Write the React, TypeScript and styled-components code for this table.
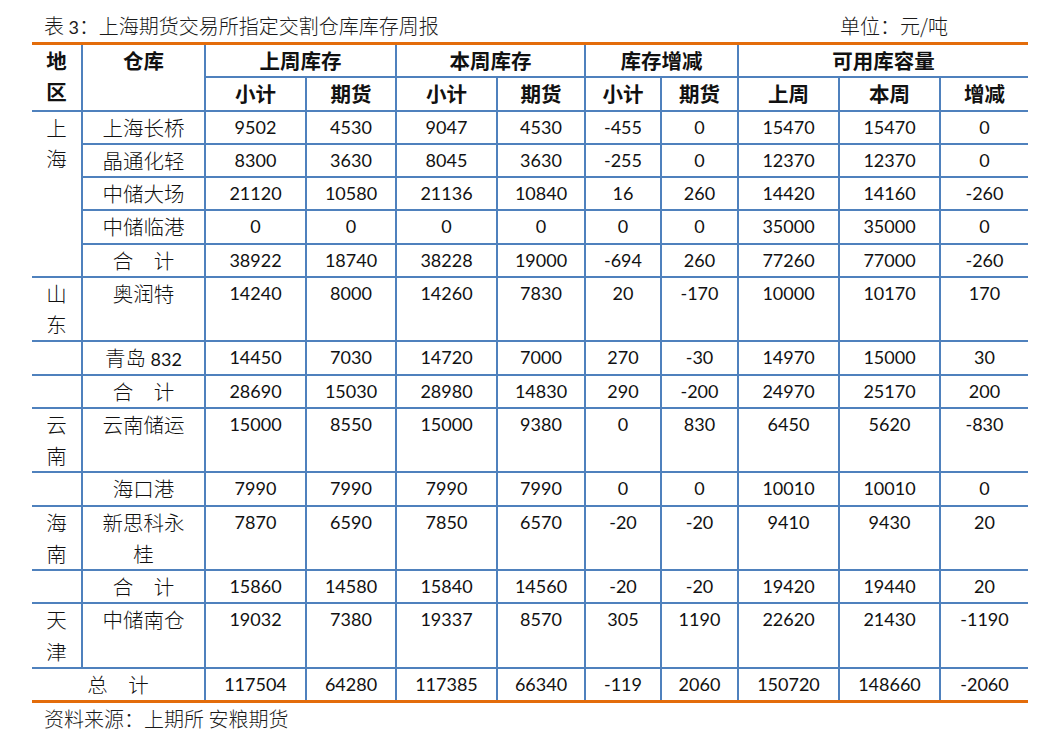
import React from 'react';
import styled, { createGlobalStyle } from 'styled-components';

const BLUE = '#4f81bd';
const ORANGE = '#e36c0a';

const GlobalStyle = createGlobalStyle`
  html, body {
    margin: 0;
    padding: 0;
    background: #ffffff;
  }
  body {
    font-family: 'Noto Sans CJK SC', sans-serif;
    color: #111111;
  }
`;

const Page = styled.div`
  width: 1058px;
  padding: 0 30px 0 32px;
  box-sizing: border-box;
`;

const TitleBar = styled.div`
  display: flex;
  justify-content: space-between;
  align-items: flex-end;
  height: 42px;
  padding: 0 80px 0 12px;
  box-sizing: border-box;
`;

const Title = styled.div`
  font-size: 20px;
  font-weight: 300;
  line-height: 32px;
  color: #1a1a1a;
`;

const Unit = styled(Title)``;

const Table = styled.table`
  width: 996px;
  table-layout: fixed;
  border-collapse: collapse;
  border-top: 3px solid ${ORANGE};
  border-bottom: 3px solid ${ORANGE};
  border-left: hidden;
  border-right: hidden;
`;

const Cell = styled.td`
  padding: 0;
  border: 2px solid ${BLUE};
  text-align: center;
  vertical-align: top;
  font-size: 20.5px;
  font-weight: 300;
  line-height: 31.25px;
  height: 31px;
  color: #111111;
  white-space: nowrap;
`;

const NumCell = styled(Cell)`
  font-family: Lato, 'Liberation Sans', sans-serif;
  font-size: 18px;
  font-weight: 400;
`;

const HeadCell = styled.th`
  padding: 0;
  border: 2px solid ${BLUE};
  text-align: center;
  vertical-align: top;
  font-size: 20.5px;
  font-weight: 700;
  line-height: 31.25px;
  height: 31px;
  color: #111111;
`;

const Num = styled.span`
  font-family: Lato, 'Liberation Sans', sans-serif;
  font-size: 18px;
  font-weight: 400;
  line-height: 1;
`;

const Source = styled.div`
  padding: 0 0 0 12px;
  font-size: 20px;
  font-weight: 300;
  line-height: 32px;
  color: #1a1a1a;
`;

type Row = {
  region?: string[] | '';
  regionSpan?: number;
  name: React.ReactNode;
  values: string[];
};

const rows: Row[] = [
  { region: ['上', '海'], regionSpan: 5, name: '上海长桥', values: ['9502', '4530', '9047', '4530', '-455', '0', '15470', '15470', '0'] },
  { name: '晶通化轻', values: ['8300', '3630', '8045', '3630', '-255', '0', '12370', '12370', '0'] },
  { name: '中储大场', values: ['21120', '10580', '21136', '10840', '16', '260', '14420', '14160', '-260'] },
  { name: '中储临港', values: ['0', '0', '0', '0', '0', '0', '35000', '35000', '0'] },
  { name: '合　计', values: ['38922', '18740', '38228', '19000', '-694', '260', '77260', '77000', '-260'] },
  { region: ['山', '东'], name: '奥润特', values: ['14240', '8000', '14260', '7830', '20', '-170', '10000', '10170', '170'] },
  { region: '', name: <>青岛 <Num>832</Num></>, values: ['14450', '7030', '14720', '7000', '270', '-30', '14970', '15000', '30'] },
  { region: '', name: '合　计', values: ['28690', '15030', '28980', '14830', '290', '-200', '24970', '25170', '200'] },
  { region: ['云', '南'], name: '云南储运', values: ['15000', '8550', '15000', '9380', '0', '830', '6450', '5620', '-830'] },
  { region: '', name: '海口港', values: ['7990', '7990', '7990', '7990', '0', '0', '10010', '10010', '0'] },
  { region: ['海', '南'], name: <>新思科永<br />桂</>, values: ['7870', '6590', '7850', '6570', '-20', '-20', '9410', '9430', '20'] },
  { region: '', name: '合　计', values: ['15860', '14580', '15840', '14560', '-20', '-20', '19420', '19440', '20'] },
  { region: ['天', '津'], name: '中储南仓', values: ['19032', '7380', '19337', '8570', '305', '1190', '22620', '21430', '-1190'] },
];

const total = ['117504', '64280', '117385', '66340', '-119', '2060', '150720', '148660', '-2060'];

const colWidths = [50, 123, 101, 90, 101, 88, 76, 77, 101, 101, 88];

const App = () => {
  return (
    <Page>
      <GlobalStyle />
      <TitleBar>
        <Title>表 <Num>3</Num>：上海期货交易所指定交割仓库库存周报</Title>
        <Unit>单位：元/吨</Unit>
      </TitleBar>
      <Table>
        <colgroup>
          {colWidths.map((w, i) => (
            <col key={i} style={{ width: w }} />
          ))}
        </colgroup>
        <thead>
          <tr>
            <HeadCell rowSpan={2}>
              地<br />区
            </HeadCell>
            <HeadCell rowSpan={2}>仓库</HeadCell>
            <HeadCell colSpan={2}>上周库存</HeadCell>
            <HeadCell colSpan={2}>本周库存</HeadCell>
            <HeadCell colSpan={2}>库存增减</HeadCell>
            <HeadCell colSpan={3}>可用库容量</HeadCell>
          </tr>
          <tr>
            <HeadCell>小计</HeadCell>
            <HeadCell>期货</HeadCell>
            <HeadCell>小计</HeadCell>
            <HeadCell>期货</HeadCell>
            <HeadCell>小计</HeadCell>
            <HeadCell>期货</HeadCell>
            <HeadCell>上周</HeadCell>
            <HeadCell>本周</HeadCell>
            <HeadCell>增减</HeadCell>
          </tr>
        </thead>
        <tbody>
          {rows.map((row, i) => (
            <tr key={i}>
              {row.region !== undefined && (
                <Cell rowSpan={row.regionSpan}>
                  {row.region === ''
                    ? null
                    : row.region.map((ch, k) => (
                        <React.Fragment key={k}>
                          {k > 0 && <br />}
                          {ch}
                        </React.Fragment>
                      ))}
                </Cell>
              )}
              <Cell>{row.name}</Cell>
              {row.values.map((v, j) => (
                <NumCell key={j}>{v}</NumCell>
              ))}
            </tr>
          ))}
          <tr>
            <Cell colSpan={2}>总　计</Cell>
            {total.map((v, j) => (
              <NumCell key={j}>{v}</NumCell>
            ))}
          </tr>
        </tbody>
      </Table>
      <Source>资料来源：上期所 安粮期货</Source>
    </Page>
  );
};

export default App;
